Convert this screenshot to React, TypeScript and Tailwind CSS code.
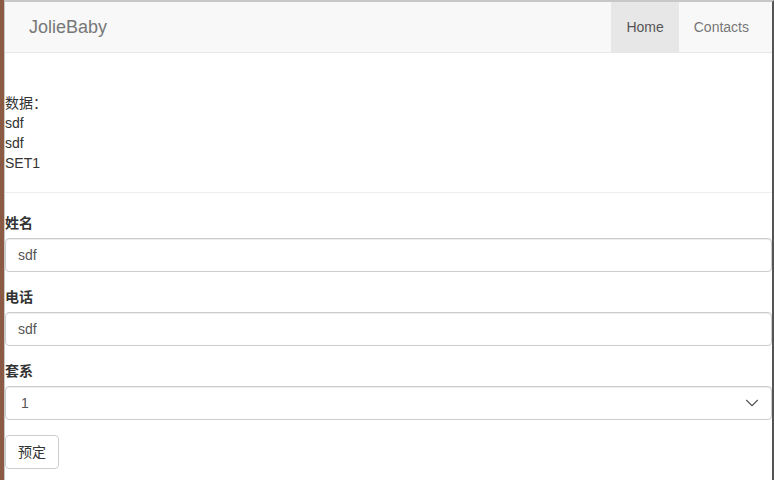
import { ChevronDown } from 'lucide-react';

export default function App() {
  return (
    <div className="flex w-[774px] h-[480px] overflow-hidden bg-white text-[14px] text-[#333] font-['Liberation_Sans','Noto_Sans_CJK_SC',sans-serif]">
      <div className="w-[4px] shrink-0 bg-[#8a5a44]" />
      <div className="flex-1 flex flex-col border-l border-t-2 border-[#c8c8c8] border-r-2 border-r-[#555] min-w-0">
        <nav className="flex h-[51px] shrink-0 items-stretch justify-between bg-[#f8f8f8] border-b border-[#e7e7e7]">
          <div className="flex items-center pl-[24px] text-[18px] text-[#777]">JolieBaby</div>
          <ul className="flex items-stretch pr-[8px]">
            <li className="flex items-center px-[15px] bg-[#e7e7e7] text-[#555]">Home</li>
            <li className="flex items-center px-[15px] text-[#777]">Contacts</li>
          </ul>
        </nav>

        <div className="pt-[40px] leading-[20px]">
          <div>数据：</div>
          <div>sdf</div>
          <div>sdf</div>
          <div>SET1</div>
        </div>

        <hr className="mt-[19px] mb-[20px] border-t border-[#eee]" />

        <form className="flex flex-col">
          <div className="mb-[15px]">
            <label className="block font-bold mb-[5px] leading-[20px]">姓名</label>
            <input
              readOnly
              value="sdf"
              className="w-full h-[34px] px-[12px] border border-[#ccc] rounded-[4px] text-[#555] shadow-[inset_0_1px_1px_rgba(0,0,0,0.075)] outline-none"
            />
          </div>
          <div className="mb-[15px]">
            <label className="block font-bold mb-[5px] leading-[20px]">电话</label>
            <input
              readOnly
              value="sdf"
              className="w-full h-[34px] px-[12px] border border-[#ccc] rounded-[4px] text-[#555] shadow-[inset_0_1px_1px_rgba(0,0,0,0.075)] outline-none"
            />
          </div>
          <div className="mb-[15px]">
            <label className="block font-bold mb-[5px] leading-[20px]">套系</label>
            <div className="relative flex items-center w-full h-[34px] pl-[15px] border border-[#ccc] rounded-[4px] text-[#555] shadow-[inset_0_1px_1px_rgba(0,0,0,0.075)]">
              1
              <ChevronDown className="absolute right-[8px] top-[5px] w-[22px] h-[22px] text-[#555]" strokeWidth={1.2} />
            </div>
          </div>
          <div>
            <button type="button" className="h-[34px] px-[12px] border border-[#ccc] rounded-[4px] bg-white text-[#333]">预定</button>
          </div>
        </form>
      </div>
    </div>
  );
}
